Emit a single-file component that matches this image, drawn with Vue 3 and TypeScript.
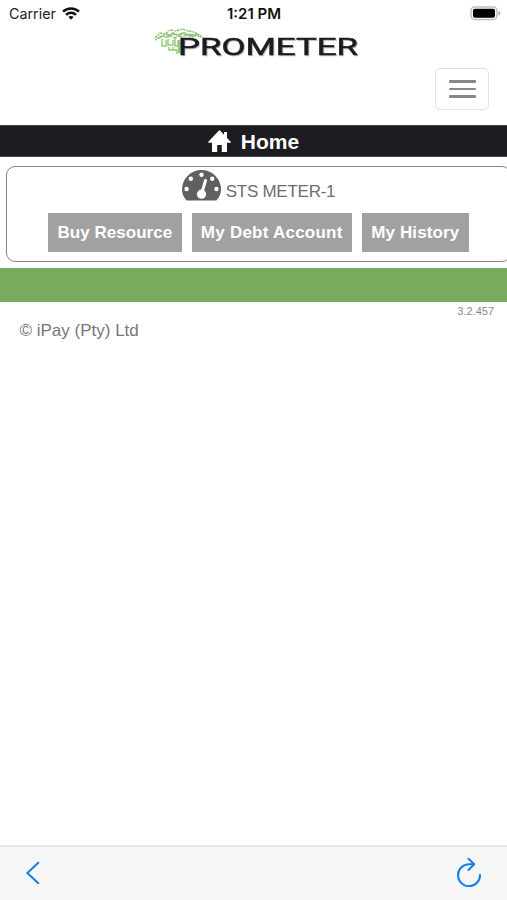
<script setup lang="ts">
interface MeterAction {
  label: string
}

interface Dot {
  x: number
  y: number
}

const meterName = 'STS METER-1'
const version = '3.2.457'
const actions: MeterAction[] = [
  { label: 'Buy Resource' },
  { label: 'My Debt Account' },
  { label: 'My History' },
]
const gaugeDots: Dot[] = [
  { x: 4.6, y: 19 },
  { x: 8.8, y: 8.8 },
  { x: 19.5, y: 4.7 },
  { x: 30.2, y: 8.8 },
  { x: 34.4, y: 19 },
]
</script>

<template>
  <div class="screen">
    <div class="status">
      <div class="carrier">
        <span>Carrier</span>
        <svg width="18" height="14" viewBox="0 0 18 14" fill="none" stroke="#111" stroke-width="2.5">
          <path d="M1 4.6C5.4.3 12.6.3 17 4.6" />
          <path d="M4 7.8c2.8-2.7 7.2-2.7 10 0" />
          <path d="M6.4 9.9c1.5-1.3 3.7-1.3 5.2 0L9 12.8Z" fill="#111" stroke="none" />
        </svg>
      </div>
      <span class="clock">1:21 PM</span>
      <svg class="battery" width="31" height="15" viewBox="0 0 31 15">
        <rect x="1" y="1" width="26" height="12.6" rx="3.8" fill="#fff" stroke="#bebebe" stroke-width="1.5" />
        <rect x="3" y="2.8" width="22" height="9" rx="1.8" fill="#000" />
        <path d="M28.5 5c2.4.8 2.4 3.8 0 4.6Z" fill="#aaa" />
      </svg>
    </div>

    <header class="header">
      <svg class="logo" width="212" height="40" viewBox="0 0 212 40">
        <g fill="none" stroke="#8fc578" stroke-width="1.6">
          <path stroke-dasharray="3 1 1.5 .8" d="M2 11 7 6l5 1 5-4 6 1 6-2 6 2 6 1 5 3 3 2" />
          <path stroke-dasharray="2 .8 4 1" d="m2 13 7-4 5 1 6-4 5 2 7-2 4 3 6-1 6 2" />
          <path stroke-dasharray="4 1 2 1" d="m6 11 7-4 9 4 8-5 9 4 6-3" />
          <path stroke-dasharray="5 1" d="m14 10 7-3 7 3 8-3 7 2" />
        </g>
        <g fill="none" stroke="#90ca70" stroke-width="1.4">
          <path d="M9 12v7h4v-6M15 12v6h5v-5M22 12v7h3v-6M16 20v3h8v4M20 23v-3" />
          <path d="M26 13v13" stroke-width="2" />
        </g>
        <text class="wordmark" x="25" y="27.5" textLength="180" lengthAdjust="spacingAndGlyphs">PROMETER</text>
      </svg>
      <button class="toggle" type="button" aria-label="Menu">
        <span class="bar" /><span class="bar" /><span class="bar" />
      </button>
    </header>

    <div class="title">
      <svg width="23" height="22" viewBox="0 0 23 22" fill="#fff">
        <path d="M11.5 0 .3 11.8c-.4.5-.2 1 .5 1H4V22h5.2v-7h4.6v7H19v-9.2h3.2c.7 0 .9-.5.5-1L19 7.9V2h-3v2.8Z" />
      </svg>
      <span>Home</span>
    </div>

    <section class="card">
      <div class="meter">
        <svg width="39" height="31" viewBox="0 0 39 31">
          <path d="M4.6 30.5C1.7 27.4 0 23.8 0 19.5a19.5 19.5 0 0 1 39 0c0 4.3-1.7 7.9-4.6 11Z" fill="#606062" />
          <circle v-for="dot in gaugeDots" :key="dot.x" :cx="dot.x" :cy="dot.y" r="2.2" fill="#fff" />
          <path d="m23.5 10.5-3.8 13" stroke="#fff" stroke-width="3" stroke-linecap="round" />
          <circle cx="19.5" cy="24.2" r="4.6" fill="#fff" />
        </svg>
        <span>{{ meterName }}</span>
      </div>
      <div class="actions">
        <button v-for="action in actions" :key="action.label" class="action" type="button">{{ action.label }}</button>
      </div>
    </section>

    <div class="band" />
    <footer class="footer">
      <span class="version">{{ version }}</span>
      <span class="copyright">© iPay (Pty) Ltd</span>
    </footer>

    <nav class="toolbar">
      <svg width="15" height="24" viewBox="0 0 15 24" fill="none" stroke="#167ee6" stroke-width="2" stroke-linecap="round" stroke-linejoin="round">
        <path d="M13.3 2.8 2.3 13 13.3 23.2" />
      </svg>
      <svg width="26" height="30" viewBox="0 0 26 30" fill="none" stroke="#167ee6" stroke-width="2" stroke-linecap="round" stroke-linejoin="round">
        <path d="M18 7.2h-5A11 11 0 1 0 24 17.8" />
        <path d="m12.5 1.7 5.7 5.5-5.7 5.8" />
      </svg>
    </nav>
  </div>
</template>

<style>
body {
  background: #fff;
}
</style>

<style scoped>
.screen {
  box-sizing: border-box;
  display: flex;
  flex-direction: column;
  width: 100%;
  height: 900px;
  overflow: hidden;
  background: #fff;
  font-family: "Liberation Sans", Arial, sans-serif;
}
.status {
  display: grid;
  grid-template-columns: 1fr auto 1fr;
  align-items: center;
  height: 27px;
  padding: 0 6px 0 9px;
  font-family: Inter, sans-serif;
  font-size: 14.3px;
  color: #222;
}
.carrier {
  display: flex;
  align-items: center;
  gap: 6px;
}
.clock {
  margin-right: 2px;
  font-weight: 600;
  font-size: 15px;
  line-height: 18px;
  color: #111;
}
.battery {
  justify-self: end;
}
.header {
  display: flex;
  flex-direction: column;
  align-items: center;
  height: 98px;
}
.logo {
  display: block;
  margin-left: 10px;
}
.wordmark {
  font-family: Roboto, "Liberation Sans", sans-serif;
  font-size: 23px;
  fill: #1d1c20;
  stroke: #1d1c20;
  stroke-width: 0.5px;
  filter: drop-shadow(1px 1px 0.5px #bbb);
}
.toggle {
  box-sizing: border-box;
  display: flex;
  flex-direction: column;
  align-items: center;
  justify-content: center;
  gap: 5px;
  align-self: flex-end;
  width: 54px;
  height: 42px;
  margin: 1px 18px 0 0;
  padding: 0;
  border: 1.5px solid #e2e2e2;
  border-radius: 5px;
  background: #fff;
}
.bar {
  width: 27px;
  height: 2.4px;
  border-radius: 1px;
  background: #888;
}
.title {
  box-sizing: border-box;
  display: flex;
  align-items: center;
  justify-content: center;
  gap: 10px;
  height: 32px;
  border-top: 1px solid #44444a;
  border-bottom: 1px solid #44444a;
  background: #1d1c21;
  color: #fff;
  font-size: 21px;
  font-weight: 700;
}
.title span {
  padding-top: 2px;
}
.card {
  box-sizing: border-box;
  width: 505px;
  height: 96px;
  flex: none;
  margin: 9px 0 0 6px;
  border: 1.5px solid #858585;
  border-radius: 9px;
}
.meter {
  display: flex;
  align-items: flex-end;
  justify-content: center;
  gap: 5px;
  height: 31px;
  margin-top: 3px;
  color: #6d6d6d;
  font-size: 17px;
  line-height: 19px;
}
.meter span {
  letter-spacing: -0.25px;
}
.actions {
  display: flex;
  justify-content: center;
  gap: 10px;
  margin-top: 12px;
}
.action {
  height: 39px;
  padding: 0 9.3px;
  border: 0;
  background: #a1a1a1;
  color: #fff;
  font: 700 17px "Liberation Sans", Arial, sans-serif;
  letter-spacing: 0.03px;
}
.action:nth-child(2) {
  letter-spacing: 0.24px;
}
.action:nth-child(3) {
  letter-spacing: 0.13px;
}
.band {
  height: 34px;
  margin-top: 6px;
  flex: none;
  background: #78ad5d;
}
.footer {
  display: flex;
  flex-direction: column;
  color: #777;
  flex: 1;
}
.version {
  align-self: flex-end;
  margin: 2px 13px 0 0;
  font-size: 11px;
  line-height: 14px;
  color: #888;
}
.copyright {
  margin: 3px 0 0 19.5px;
  font-size: 17px;
  line-height: 20px;
}
.toolbar {
  box-sizing: border-box;
  display: flex;
  justify-content: space-between;
  align-items: center;
  height: 55px;
  padding: 0 25px 3px;
  border-top: 2px solid #e8e8e8;
  background: #f6f6f6;
}
</style>
